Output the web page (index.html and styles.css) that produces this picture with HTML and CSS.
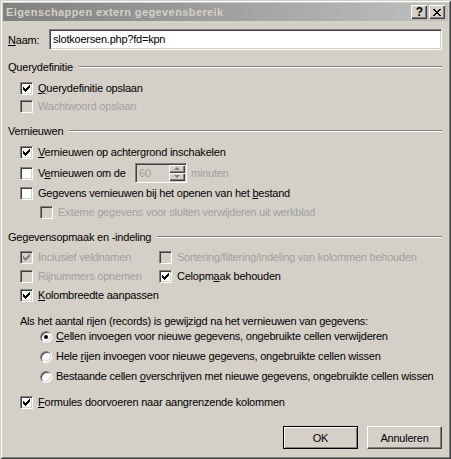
FILE: index.html
```html
<!DOCTYPE html>
<html>
<head>
<meta charset="utf-8">
<link rel="stylesheet" href="styles.css">
</head>
<body>
<div class="window">
  <div class="titlebar">
    <span class="title">Eigenschappen extern gegevensbereik</span>
    <div class="tbtns">
      <span class="tbtn help">?</span>
      <span class="tbtn close"><svg width="8" height="7" viewBox="0 0 8 7" shape-rendering="crispEdges"><path d="M0 0h2v1h-2z M6 0h2v1h-2z M1 1h2v1h-2z M5 1h2v1h-2z M2 2h4v1h-4z M3 3h2v1h-2z M2 4h4v1h-4z M1 5h2v1h-2z M5 5h2v1h-2z M0 6h2v1h-2z M6 6h2v1h-2z" fill="#000"/></svg></span>
    </div>
  </div>
  <div class="content">
    <div class="naam-row">
      <span class="naam-lbl"><u>N</u>aam:</span>
      <div class="textbox">slotkoersen.php?fd=kpn</div>
    </div>

    <div class="heading h1"><span>Querydefinitie</span><span class="etch"></span></div>
    <div class="row r-a"><span class="cb"><svg viewBox="1 1 11 11" width="11" height="11" shape-rendering="crispEdges"><path d="M3 5h1v3h-1z M4 6h1v3h-1z M5 7h1v3h-1z M6 6h1v3h-1z M7 5h1v3h-1z M8 4h1v3h-1z M9 3h1v3h-1z"/></svg></span><span class="txt"><u>Q</u>uerydefinitie opslaan</span></div>
    <div class="row r-b disabled"><span class="cb"></span><span class="txt">Wachtwoord opslaan</span></div>

    <div class="heading h2"><span>Vernieuwen</span><span class="etch"></span></div>
    <div class="row r-c"><span class="cb"><svg viewBox="1 1 11 11" width="11" height="11" shape-rendering="crispEdges"><path d="M3 5h1v3h-1z M4 6h1v3h-1z M5 7h1v3h-1z M6 6h1v3h-1z M7 5h1v3h-1z M8 4h1v3h-1z M9 3h1v3h-1z"/></svg></span><span class="txt"><u>V</u>ernieuwen op achtergrond inschakelen</span></div>
    <div class="row r-spin"><span class="cb"></span><span class="txt spin-lbl">V<u>e</u>rnieuwen om de</span>
      <div class="spinbox">
        <span class="spinval">60</span>
        <div class="spinbtns">
          <span class="sbtn"><span class="arr-up"></span></span>
          <span class="sbtn"><span class="arr-down"></span></span>
        </div>
      </div>
      <span class="txt gray minuten">minuten</span>
    </div>
    <div class="row r-d"><span class="cb"></span><span class="txt">Gegevens vernieuwen bij het openen van het <u>b</u>estand</span></div>
    <div class="row r-e disabled indent"><span class="cb"></span><span class="txt">Externe gegevens voor sluiten verwijderen uit werkblad</span></div>

    <div class="heading h3"><span>Gegevensopmaak en -indeling</span><span class="etch"></span></div>
    <div class="grid2">
      <div class="row r-f disabled"><span class="cb"><svg viewBox="1 1 11 11" width="11" height="11" shape-rendering="crispEdges"><path d="M3 5h1v3h-1z M4 6h1v3h-1z M5 7h1v3h-1z M6 6h1v3h-1z M7 5h1v3h-1z M8 4h1v3h-1z M9 3h1v3h-1z"/></svg></span><span class="txt">Inclusief veldnamen</span></div>
      <div class="row r-f col2 disabled"><span class="cb"></span><span class="txt">Sortering/filtering/indeling van kolommen behouden</span></div>
      <div class="row r-g disabled"><span class="cb"></span><span class="txt">Rijnummers opnemen</span></div>
      <div class="row r-g col2"><span class="cb"><svg viewBox="1 1 11 11" width="11" height="11" shape-rendering="crispEdges"><path d="M3 5h1v3h-1z M4 6h1v3h-1z M5 7h1v3h-1z M6 6h1v3h-1z M7 5h1v3h-1z M8 4h1v3h-1z M9 3h1v3h-1z"/></svg></span><span class="txt">Celopm<u>a</u>ak behouden</span></div>
      <div class="row r-g"><span class="cb"><svg viewBox="1 1 11 11" width="11" height="11" shape-rendering="crispEdges"><path d="M3 5h1v3h-1z M4 6h1v3h-1z M5 7h1v3h-1z M6 6h1v3h-1z M7 5h1v3h-1z M8 4h1v3h-1z M9 3h1v3h-1z"/></svg></span><span class="txt"><u>K</u>olombreedte aanpassen</span></div>
    </div>

    <div class="als">Als het aantal rijen (records) is gewijzigd na het vernieuwen van gegevens:</div>
    <div class="row r-r1 indent"><span class="radio"><span class="dot"></span></span><span class="txt rtxt"><u>C</u>ellen invoegen voor nieuwe gegevens, ongebruikte cellen verwijderen</span></div>
    <div class="row r-r indent"><span class="radio"></span><span class="txt rtxt">Hele <u>r</u>ijen invoegen voor nieuwe gegevens, ongebruikte cellen wissen</span></div>
    <div class="row r-r indent"><span class="radio"></span><span class="txt rtxt">Bestaande cellen <u>o</u>verschrijven met nieuwe gegevens, ongebruikte cellen wissen</span></div>

    <div class="row r-form"><span class="cb"><svg viewBox="1 1 11 11" width="11" height="11" shape-rendering="crispEdges"><path d="M3 5h1v3h-1z M4 6h1v3h-1z M5 7h1v3h-1z M6 6h1v3h-1z M7 5h1v3h-1z M8 4h1v3h-1z M9 3h1v3h-1z"/></svg></span><span class="txt"><u>F</u>ormules doorvoeren naar aangrenzende kolommen</span></div>

    <div class="btnrow">
      <span class="btn default">OK</span>
      <span class="btn">Annuleren</span>
    </div>
  </div>
</div>
</body>
</html>
```

FILE: styles.css
```css
html, body {
  margin: 0;
  padding: 0;
  background: #d4d0c8;
}
body {
  font-family: "Liberation Sans", Arial, sans-serif;
  font-size: 11px;
  letter-spacing: -0.22px;
  color: #000;
}
u {
  text-decoration: underline;
  text-underline-offset: 1px;
}
.window {
  width: 451px;
  height: 459px;
  box-sizing: border-box;
  padding: 3px;
  background: #d4d0c8;
  box-shadow: inset 1px 1px #d4d0c8, inset -1px -1px #404040, inset 2px 2px #fff, inset -2px -2px #808080;
  overflow: hidden;
}
.titlebar {
  height: 18px;
  background: linear-gradient(to right, #808080, #c0c0c0);
  display: flex;
  align-items: center;
  justify-content: space-between;
  padding: 0 3px 0 3px;
}
.title {
  color: #d4d0c8;
  font-weight: bold;
  letter-spacing: 0.4px;
  line-height: 14px;
}
.tbtns {
  display: flex;
  gap: 2px;
}
.tbtn {
  width: 16px;
  height: 14px;
  box-sizing: border-box;
  background: #d4d0c8;
  box-shadow: inset 1px 1px #fff, inset -1px -1px #404040, inset -2px -2px #808080;
  display: flex;
  align-items: center;
  justify-content: center;
}
.help {
  font-weight: bold;
  font-size: 12px;
  line-height: 12px;
  letter-spacing: 0;
  padding-left: 1px;
}
.close svg {
  display: block;
}
.content {
  padding: 0 6px 0 5px;
}
.naam-row {
  display: flex;
  align-items: center;
  height: 21px;
  margin-top: 8px;
}
.naam-lbl {
  width: 41px;
}
.textbox {
  flex: 1;
  height: 21px;
  box-sizing: border-box;
  background: #fff;
  border: 1px solid;
  border-color: #808080 #fff #fff #808080;
  box-shadow: inset 1px 1px #404040, inset -1px -1px #d4d0c8;
  padding: 0 0 0 3px;
  line-height: 19px;
  display: flex;
  align-items: center;
}
.heading {
  display: flex;
  align-items: center;
  height: 14px;
}
.heading .etch {
  flex: 1;
  height: 0;
  border-top: 1px solid #808080;
  border-bottom: 1px solid #fff;
  margin-left: 6px;
}
.h1 { margin-top: 10px; }
.h2 { margin-top: 9px; }
.h3 { margin-top: 9px; }
.row {
  display: flex;
  align-items: center;
  height: 17px;
  padding-left: 12px;
}
.row.indent {
  padding-left: 32px;
}
.r-a { margin-top: 6px; }
.r-b { margin-top: 1px; }
.r-c { margin-top: 6px; }
.r-spin { height: 20px; margin-top: 2px; }
.r-d { margin-top: 2px; }
.r-e { margin-top: 2px; }
.grid2 {
  display: grid;
  grid-template-columns: 151px 1fr;
  margin-top: 5px;
  row-gap: 2px;
}
.grid2 .row.col2 {
  padding-left: 0;
}
.cb {
  width: 13px;
  height: 13px;
  flex: none;
  box-sizing: border-box;
  background: #fff;
  border: 1px solid;
  border-color: #808080 #fff #fff #808080;
  box-shadow: inset 1px 1px #404040, inset -1px -1px #d4d0c8;
  display: block;
}
.cb svg {
  display: block;
  fill: #000;
}
.disabled .cb {
  background: #d4d0c8;
}
.disabled .cb svg {
  fill: #808080;
}
.disabled .txt, .gray {
  color: #a0a0a0;
}
.txt {
  margin-left: 5px;
  white-space: nowrap;
  line-height: 13px;
}
.spin-lbl {
  width: 97px;
}
.spinbox {
  width: 52px;
  height: 20px;
  box-sizing: border-box;
  background: #d4d0c8;
  border: 1px solid;
  border-color: #808080 #fff #fff #808080;
  box-shadow: inset 1px 1px #404040, inset -1px -1px #d4d0c8;
  display: flex;
  align-items: center;
  justify-content: space-between;
  padding: 1px 1px 1px 3px;
}
.spinval {
  color: #a0a0a0;
}
.spinbtns {
  display: flex;
  flex-direction: column;
  width: 16px;
}
.sbtn {
  height: 8px;
  box-sizing: border-box;
  background: #d4d0c8;
  box-shadow: inset 1px 1px #fff, inset -1px -1px #404040, inset -2px -2px #808080;
  display: flex;
  align-items: center;
  justify-content: center;
}
.arr-up {
  width: 0;
  height: 0;
  border-left: 3px solid transparent;
  border-right: 3px solid transparent;
  border-bottom: 3px solid #808080;
  margin-top: -1px;
}
.arr-down {
  width: 0;
  height: 0;
  border-left: 3px solid transparent;
  border-right: 3px solid transparent;
  border-top: 3px solid #808080;
  margin-top: -1px;
}
.minuten {
  margin-left: 4px;
}
.als {
  height: 14px;
  line-height: 14px;
  margin-top: 10px;
  padding-left: 12px;
}
.radio {
  width: 12px;
  height: 12px;
  flex: none;
  box-sizing: border-box;
  border-radius: 50%;
  background: #fff;
  border: 1px solid;
  border-color: #808080 #fff #fff #808080;
  box-shadow: inset 1px 1px #404040, inset -1px -1px #d4d0c8;
  display: flex;
  align-items: center;
  justify-content: center;
}
.dot {
  width: 4px;
  height: 4px;
  border-radius: 50%;
  background: #000;
}
.rtxt {
  margin-left: 4px;
}
.r-r1 { margin-top: 0; }
.r-r { margin-top: 3px; }
.r-form { margin-top: 9px; }
.btnrow {
  display: flex;
  justify-content: flex-end;
  gap: 9px;
  margin-top: 15px;
}
.btn {
  width: 75px;
  height: 23px;
  box-sizing: border-box;
  background: #d4d0c8;
  border: 1px solid;
  border-color: #fff #404040 #404040 #fff;
  box-shadow: inset -1px -1px #808080;
  display: flex;
  align-items: center;
  justify-content: center;
}
.btn.default {
  border-color: #000;
  box-shadow: inset 1px 1px #fff, inset -1px -1px #808080;
}
```
